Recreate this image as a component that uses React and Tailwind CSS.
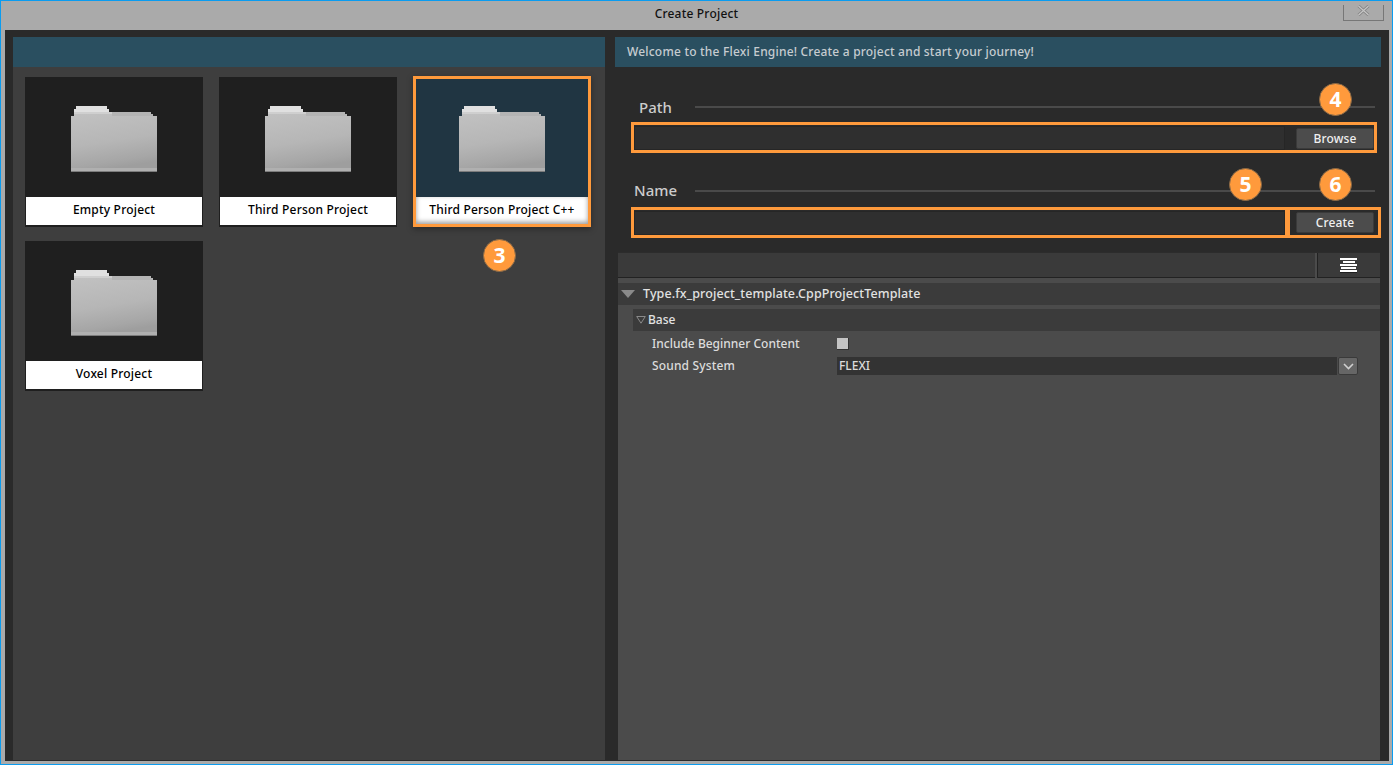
import React from "react";

const FONT = "font-['Noto_Sans','Open_Sans',sans-serif]";

const templates = [
  { id: "empty", label: "Empty Project" },
  { id: "third", label: "Third Person Project" },
  { id: "cpp", label: "Third Person Project C++", selected: true },
  { id: "voxel", label: "Voxel Project" },
];

const FolderIcon = ({ id }) => (
  <svg width="86" height="66" viewBox="0 0 86 66" className="block" shapeRendering="crispEdges">
    <defs>
      <linearGradient id={`body-${id}`} x1="0" y1="0" x2="0.2" y2="1">
        <stop offset="0" stopColor="#c4c4c4" />
        <stop offset="0.6" stopColor="#b6b6b6" />
        <stop offset="0.9" stopColor="#a6a6a6" />
        <stop offset="1" stopColor="#9e9e9e" />
      </linearGradient>
    </defs>
    <path d="M5 0h31v3h2v3H80v2h2v2h4v56H0V10h3V6h1V3h1z" fill={`url(#body-${id})`} />
    <path d="M5 0h31v3h2v3H3V3h2z" fill="#e0e0e0" />
    <path d="M3 6h38v2H3z" fill="#cfcfcf" />
    <path d="M41 6h39v2h2v2H41z" fill="#b4b4b4" />
    <rect x="0" y="62" width="86" height="3" fill="#b0b0b0" />
    <rect x="0" y="65" width="86" height="1" fill="#7c7c7c" />
  </svg>
);

const TemplateCard = ({ id, label, selected }) => (
  <div
    className={
      selected
        ? "flex flex-col -mt-px h-[151px] border-[3px] border-[#ff9a3c] bg-[#203542] shadow-[0_2px_6px_rgba(0,0,0,0.35)]"
        : "flex flex-col h-[150px] bg-[#1f1f1f] px-px pb-0.5"
    }
  >
    <div className={selected ? "flex-1 flex justify-center pt-[27px]" : "flex-1 flex justify-center pt-[29px]"}>
      <FolderIcon id={id} />
    </div>
    <div
      className={
        selected
          ? "h-[27px] bg-white shadow-[inset_0_-2px_5px_rgba(0,0,0,0.4)] flex items-center justify-center pb-px text-[12px] tracking-[0.2px] font-medium text-black"
          : "h-[28px] bg-white flex items-center justify-center pb-[3px] text-[12px] tracking-[0.2px] font-medium text-black"
      }
    >
      {label}
    </div>
  </div>
);

const SectionLabel = ({ children, className }) => (
  <div className={`flex items-center h-5 ${className}`}>
    <span className="text-[15px] font-medium text-[#cccccc]">{children}</span>
  </div>
);

const Badge = ({ n, className }) => (
  <div
    className={`absolute w-[33px] h-[33px] rounded-full bg-[#ff9a3c] border border-[#8a6a48] flex items-center justify-center text-white text-[21px] font-bold ${className}`}
  >
    {n}
  </div>
);

const DarkButton = ({ children }) => (
  <button
    type="button"
    className="w-[78px] h-[21px] bg-[#4c4c4c] border border-[#3a3a3a] rounded-[2px] text-[12px] tracking-[0.1px] font-medium text-[#f0f0f0] flex items-center justify-center"
  >
    {children}
  </button>
);

export default function App() {
  return (
    <div className={`${FONT} relative w-[1393px] h-[765px] overflow-hidden bg-[#aaaaaa] border border-[#0a9cf0] flex flex-col`}>
      {/* title bar */}
      <div className="relative h-[29px] shrink-0 flex items-center justify-center pb-[3px] text-[12px] tracking-[0.2px] font-medium text-[#111]">
        Create Project
        <div className="absolute right-2 top-1 w-[41px] h-[16px] border-x border-b border-[#777] flex items-start justify-center">
          <svg width="13" height="11" viewBox="0 0 13 11">
            <path d="M1.5 1l10 9M11.5 1l-10 9" stroke="#848484" strokeWidth="3" fill="none" />
            <path d="M1.5 1l10 9M11.5 1l-10 9" stroke="#c6c6c6" strokeWidth="1.2" fill="none" />
          </svg>
        </div>
      </div>

      <div className="flex ml-1 mr-[3px] mb-[3px] flex-1 min-h-0 bg-[#2a2a2a] pt-[7px] pl-2 pr-2">
        {/* templates */}
        <div className="w-[592px] shrink-0 flex flex-col bg-[#3e3e3e] mb-px">
          <div className="h-[30px] bg-[#2a4f60] shrink-0" />
          <div className="grid grid-cols-[178px_178px_178px] gap-x-4 gap-y-[14px] pl-3 pt-[10px] content-start">
            {templates.map((t) => (
              <TemplateCard key={t.id} {...t} />
            ))}
          </div>
        </div>

        {/* settings */}
        <div className="flex-1 ml-[10px] flex flex-col min-w-0">
          <div className="h-[30px] shrink-0 bg-[#2a4f60] flex items-center pl-3 text-[12px] tracking-[0.2px] font-medium text-[#c6ccd0]">
            Welcome to the Flexi Engine! Create a project and start your journey!
          </div>

          <div className="relative mt-[30px]">
            <SectionLabel className="pl-6">Path</SectionLabel>
            <div className="absolute left-20 right-1.5 top-[9px] h-0.5 bg-[#4a4a4a]" />
          </div>
          <div className="mt-[5px] ml-4 w-[746px] h-[31px] border-[3px] border-[#ff9a3c] flex items-start">
            <div className="mt-px w-[651px] h-[24px] bg-[#2f2f2f] border border-[#262626]" />
            <div className="ml-[11px] mt-[3px] flex"><DarkButton>Browse</DarkButton></div>
          </div>

          <div className="relative mt-[27px]">
            <SectionLabel className="pl-[19px]">Name</SectionLabel>
            <div className="absolute left-20 right-1.5 top-[10px] h-0.5 bg-[#4a4a4a]" />
          </div>
          <div className="mt-[7px] ml-4 flex h-[31px]">
            <div className="w-[657px] border-[3px] border-[#ff9a3c] flex items-center">
              <div className="w-[651px] h-[24px] bg-[#2f2f2f] border border-[#262626]" />
            </div>
            <div className="-ml-px w-[94px] border-[3px] border-[#ff9a3c] flex items-center pl-1.5">
              <DarkButton>Create</DarkButton>
            </div>
          </div>

          {/* details */}
          <div className="mt-[14px] ml-[3px] mr-px flex-1 flex flex-col bg-[#4b4b4b] mb-px">
            <div className="h-[26px] shrink-0 flex bg-[#2c2c2c] pt-px">
              <div className="flex-1 bg-[#3a3a3a] border-b border-[#222]" />
              <div className="w-[2px] bg-[#4b4b4b]" />
              <div className="w-[63px] bg-[#3a3a3a] border-b border-l border-[#222] flex items-center justify-center">
                <svg width="18" height="15" viewBox="0 0 18 15" shapeRendering="crispEdges">
                  <path d="M0 0h17v2H0zM3 3h12v2H3zM0 6h17v2H0zM1 9h15v2H1zM0 12h17v2H0z" fill="#fff" />
                  <path d="M0 14h17v1H0z" fill="#1f1f1f" />
                </svg>
              </div>
            </div>

            <div className="mt-[5px] h-[22px] shrink-0 bg-[#3b3b3b] flex items-center text-[12.5px] tracking-[0.1px] font-medium text-[#e2e2e2]">
              <svg width="14" height="8" viewBox="0 0 14 8" className="ml-[3px] mr-2">
                <path d="M0 0h14L7 8z" fill="#8a8a8a" />
              </svg>
              Type.fx_project_template.CppProjectTemplate
            </div>

            <div className="mt-1 ml-[15px] h-[22px] shrink-0 bg-[#3b3b3b] flex items-center text-[12px] font-medium text-[#e2e2e2]">
              <svg width="10" height="8" viewBox="0 0 10 8" className="ml-[3px] mr-0.5">
                <path d="M.7.5h8.6L5 7.2z" fill="none" stroke="#8a8a8a" />
              </svg>
              Base
            </div>

            <div className="mt-0.5 h-[22px] shrink-0 flex items-center pl-[34px] text-[12px] font-medium text-[#dcdcdc]">
              <span className="w-[185px]">Include Beginner Content</span>
              <span className="w-3 h-3 bg-[#c4c4c4] border-r border-b border-[#333]" />
            </div>
            <div className="h-[22px] shrink-0 flex items-center pl-[34px] text-[12px] font-medium text-[#dcdcdc]">
              <span className="w-[185px] tracking-[0.15px]">Sound System</span>
              <div className="w-[500px] h-[18px] bg-[#333333] pl-0.5 flex items-center text-[#dcdcdc]">FLEXI</div>
              <div className="ml-px w-[20px] h-[18px] bg-[#666666] border border-[#3a3a3a] rounded-[2px] flex items-center justify-center">
                <svg width="11" height="7" viewBox="0 0 11 7">
                  <path d="M1 1l4.5 4.5L10 1" fill="none" stroke="#d0d0d0" strokeWidth="1.6" />
                </svg>
              </div>
            </div>
          </div>
        </div>
      </div>

      {/* step markers */}
      <Badge n="3" className="left-[482px] top-[238px]" />
      <Badge n="4" className="left-[1318px] top-[82px]" />
      <Badge n="5" className="left-[1228px] top-[167px]" />
      <Badge n="6" className="left-[1318px] top-[167px]" />
    </div>
  );
}
